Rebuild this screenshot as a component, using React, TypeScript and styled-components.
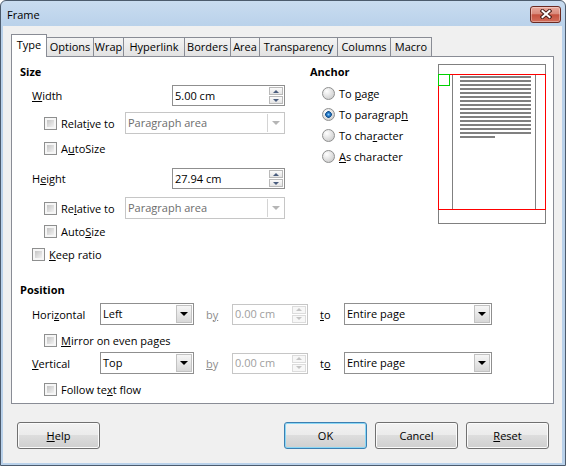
import React from "react";
import styled, { createGlobalStyle } from "styled-components";

const GlobalStyle = createGlobalStyle`
  html, body { margin: 0; padding: 0; background: #ffffff; }
  body { font-family: "Open Sans", "Noto Sans", "DejaVu Sans", sans-serif; font-size: 11px; color: #000; }
  *, *::before, *::after { box-sizing: border-box; }
`;

const Window = styled.div`
  width: 566px;
  height: 466px;
  display: flex;
  flex-direction: column;
  border: 1px solid #4c5b6d;
  border-radius: 6px 6px 0 0;
  background: linear-gradient(#c9dcf0, #b9d1ea 26px, #b9d1ea);
  padding: 0 3px 2px 2px;
  overflow: hidden;
`;

const TitleBar = styled.div`
  height: 25px;
  flex: none;
  display: flex;
  align-items: center;
  justify-content: space-between;
  padding: 1px 1px 0 4px;
`;

const Title = styled.span`
  font-size: 11px;
  color: #000;
`;

const CloseButton = styled.div`
  width: 31px;
  height: 17px;
  border: 1px solid #6b2a22;
  border-radius: 3px;
  background: linear-gradient(#e9a99c, #d98a7b 45%, #c5513e 52%, #d26e5b);
  box-shadow: inset 0 0 0 1px rgba(255, 255, 255, 0.35);
  display: flex;
  align-items: center;
  justify-content: center;
`;

const Content = styled.div`
  flex: 1;
  background: #f0f0f0;
  display: flex;
  flex-direction: column;
  padding: 8px 8px 0 8px;
`;

const TabBar = styled.div`
  height: 22px;
  display: flex;
  align-items: flex-end;
  position: relative;
  z-index: 1;
`;

const Tab = styled.div<{ $w: number; $active?: boolean }>`
  width: ${(p) => p.$w}px;
  height: ${(p) => (p.$active ? 23 : 19)}px;
  margin-bottom: ${(p) => (p.$active ? -1 : 0)}px;
  margin-left: -1px;
  &:first-child { margin-left: 0; }
  border: 1px solid #898c95;
  border-bottom: none;
  background: ${(p) => (p.$active ? "#ffffff" : "linear-gradient(#f4f4f4, #e2e2e2)")};
  display: flex;
  align-items: center;
  justify-content: center;
  padding-bottom: ${(p) => (p.$active ? 3 : 2)}px;
  position: relative;
  z-index: ${(p) => (p.$active ? 2 : 1)};
  white-space: nowrap;
`;

const Panel = styled.div`
  height: 348px;
  border: 1px solid #898c95;
  background: #ffffff;
  padding: 7px 7px 0 8px;
  display: flex;
  flex-direction: column;
`;

const TopArea = styled.div`
  display: flex;
  align-items: flex-start;
`;

const LeftCol = styled.div`
  width: 265px;
  display: flex;
  flex-direction: column;
`;

const AnchorCol = styled.div`
  flex: 1;
  margin-left: 25px;
  display: flex;
  flex-direction: column;
`;

const Heading = styled.div<{ $mt?: number }>`
  font-weight: 700;
  height: 16px;
  line-height: 15px;
  margin-top: ${(p) => p.$mt ?? 0}px;
`;

const Row = styled.div<{ $mt?: number; $h?: number; $indent?: number }>`
  display: flex;
  align-items: center;
  height: ${(p) => p.$h ?? 20}px;
  margin-top: ${(p) => p.$mt ?? 0}px;
  padding-left: ${(p) => p.$indent ?? 0}px;
  white-space: nowrap;
`;

const Mn = styled.span`
  text-decoration: underline;
`;

const Label = styled.span<{ $w?: number; $ml?: number; $disabled?: boolean }>`
  ${(p) => (p.$w ? `width: ${p.$w}px; flex: none;` : "")}
  margin-left: ${(p) => p.$ml ?? 0}px;
  color: ${(p) => (p.$disabled ? "#8d8d8d" : "#000")};
`;

const CheckBox = styled.span`
  width: 13px;
  height: 13px;
  flex: none;
  border: 1px solid #8e8f8f;
  padding: 2px;
  background: linear-gradient(135deg, #c4c4c4, #f2f2f2) content-box, #f6f6f6;
  margin-right: 4px;
`;

const Radio = styled.span<{ $checked?: boolean }>`
  width: 13px;
  height: 13px;
  flex: none;
  border-radius: 50%;
  border: 1px solid #8e8f8f;
  margin-right: 4px;
  background: ${(p) =>
    p.$checked
      ? "radial-gradient(circle at 50% 50%, #8fd3ff 0, #2b7fce 1.5px, #134f8c 3px, transparent 3.6px), radial-gradient(circle at 35% 30%, #ffffff, #d2d2d2 75%)"
      : "radial-gradient(circle at 35% 30%, #ffffff, #d2d2d2 75%)"};
`;

const Field = styled.div<{ $w: number; $h?: number; $disabled?: boolean }>`
  width: ${(p) => p.$w}px;
  height: ${(p) => p.$h ?? 21}px;
  flex: none;
  display: flex;
  align-items: stretch;
  border: 1px solid ${(p) => (p.$disabled ? "#c6c6c6" : "#8f8f8f")};
  background: #ffffff;
  padding: 1px;
`;

const PushRight = styled.div`
  margin-left: auto;
  display: flex;
`;

const FieldText = styled.div<{ $disabled?: boolean; $soft?: boolean }>`
  flex: 1;
  display: flex;
  align-items: center;
  padding-left: 1px;
  padding-bottom: 1px;
  color: ${(p) => (p.$disabled ? "#a0a0a0" : p.$soft ? "#6d6d6d" : "#000")};
`;

const SpinButtons = styled.div`
  width: 14px;
  display: flex;
  flex-direction: column;
  gap: 1px;
`;

const SpinHalf = styled.div<{ $disabled?: boolean }>`
  flex: 1;
  border: 1px solid ${(p) => (p.$disabled ? "#dcdcdc" : "#b9b9b9")};
  background: ${(p) => (p.$disabled ? "#f7f7f7" : "linear-gradient(#fbfbfb, #e4e4e4)")};
  display: flex;
  align-items: center;
  justify-content: center;
`;

const SpinArrow = styled.span<{ $up?: boolean; $disabled?: boolean }>`
  width: 0;
  height: 0;
  border-left: 3px solid transparent;
  border-right: 3px solid transparent;
  ${(p) =>
    p.$up
      ? `border-bottom: 3px solid ${p.$disabled ? "#c4c4c4" : "#4a5d7e"};`
      : `border-top: 3px solid ${p.$disabled ? "#c4c4c4" : "#4a5d7e"};`}
`;

const DropButton = styled.div<{ $disabled?: boolean }>`
  width: 16px;
  flex: none;
  display: flex;
  align-items: center;
  justify-content: center;
  ${(p) =>
    p.$disabled
      ? "border-left: 1px solid #d4d4d4; background: #ffffff;"
      : "border: 1px solid #c2c2c2; background: linear-gradient(#f6f6f6, #d8d8d8);"}
`;

const DropArrow = styled.span<{ $disabled?: boolean }>`
  width: 0;
  height: 0;
  border-left: 4px solid transparent;
  border-right: 4px solid transparent;
  border-top: 4px solid ${(p) => (p.$disabled ? "#b5b5b5" : "#000")};
`;

const PreviewSvg = styled.svg`
  flex: none;
  display: block;
`;

const ButtonRow = styled.div`
  display: flex;
  align-items: center;
  gap: 8px;
  margin-top: 18px;
  padding: 0 5px 0 6px;
`;

const Spacer = styled.div`
  flex: 1;
`;

const Button = styled.button<{ $default?: boolean }>`
  width: 83px;
  height: 27px;
  padding: 0 0 1px 0;
  font: inherit;
  color: #000;
  border: 1px solid ${(p) => (p.$default ? "#3c7fb1" : "#707070")};
  border-radius: 3px;
  background: linear-gradient(#f2f2f2, #ebebeb 50%, #dddddd 50%, #cfcfcf);
  box-shadow: inset 0 0 0 1px ${(p) => (p.$default ? "#8ad7f5" : "#fbfbfb")};
`;

const tabs = [
  { label: "Type", w: 36, active: true },
  { label: "Options", w: 48 },
  { label: "Wrap", w: 31 },
  { label: "Hyperlink", w: 62 },
  { label: "Borders", w: 47 },
  { label: "Area", w: 30 },
  { label: "Transparency", w: 79 },
  { label: "Columns", w: 54 },
  { label: "Macro", w: 42 },
];

function Spin({ w, value, disabled }: { w: number; value: string; disabled?: boolean }) {
  return (
    <Field $w={w} $disabled={disabled}>
      <FieldText $disabled={disabled}>{value}</FieldText>
      <SpinButtons>
        <SpinHalf $disabled={disabled}>
          <SpinArrow $up $disabled={disabled} />
        </SpinHalf>
        <SpinHalf $disabled={disabled}>
          <SpinArrow $disabled={disabled} />
        </SpinHalf>
      </SpinButtons>
    </Field>
  );
}

function Dropdown({ w, value, disabled }: { w: number; value: string; disabled?: boolean }) {
  return (
    <Field $w={w} $h={22} $disabled={disabled}>
      <FieldText $soft={disabled}>{value}</FieldText>
      <DropButton $disabled={disabled}>
        <DropArrow $disabled={disabled} />
      </DropButton>
    </Field>
  );
}

function Preview() {
  const lines = Array.from({ length: 15 }, (_, i) => i);
  return (
    <PreviewSvg width="108" height="160" viewBox="0 0 108 160">
      <rect x="0.5" y="0.5" width="107" height="159" fill="#ffffff" stroke="#808080" />
      <line x1="14.5" y1="10.5" x2="14.5" y2="145.5" stroke="#808080" />
      <line x1="97.5" y1="10.5" x2="97.5" y2="145.5" stroke="#808080" />
      {lines.map((i) => (
        <rect key={i} x="22" y={12 + i * 4} width="71" height="2" fill="#808080" />
      ))}
      <rect x="22" y="72" width="35" height="2" fill="#808080" />
      <rect x="0.5" y="10.5" width="107" height="135" fill="none" stroke="#ff0000" />
      <rect x="0.5" y="10.5" width="11" height="11" fill="none" stroke="#00d000" />
    </PreviewSvg>
  );
}

export default function App() {
  return (
    <>
      <GlobalStyle />
      <Window>
        <TitleBar>
          <Title>Frame</Title>
          <CloseButton>
            <svg width="12" height="10" viewBox="0 0 12 10">
              <path d="M2.5 2 L9.5 8 M9.5 2 L2.5 8" stroke="#4a1f1a" strokeWidth="4" strokeLinecap="square" />
              <path d="M2.5 2 L9.5 8 M9.5 2 L2.5 8" stroke="#ffffff" strokeWidth="2" strokeLinecap="square" />
            </svg>
          </CloseButton>
        </TitleBar>
        <Content>
          <TabBar>
            {tabs.map((t) => (
              <Tab key={t.label} $w={t.w} $active={t.active}>
                {t.label}
              </Tab>
            ))}
          </TabBar>
          <Panel>
            <TopArea>
              <LeftCol>
                <Heading>Size</Heading>
                <Row $mt={5} $h={21} $indent={12}>
                  <Label><Mn>W</Mn>idth</Label>
                  <PushRight><Spin w={113} value="5.00 cm" /></PushRight>
                </Row>
                <Row $mt={6} $h={22} $indent={24}>
                  <CheckBox />
                  <Label>Relat<Mn>i</Mn>ve to</Label>
                  <PushRight><Dropdown w={160} value="Paragraph area" disabled /></PushRight>
                </Row>
                <Row $mt={4} $h={20} $indent={24}>
                  <CheckBox />
                  <Label>A<Mn>u</Mn>toSize</Label>
                </Row>
                <Row $mt={10} $h={21} $indent={12}>
                  <Label>H<Mn>e</Mn>ight</Label>
                  <PushRight><Spin w={113} value="27.94 cm" /></PushRight>
                </Row>
                <Row $mt={8} $h={22} $indent={24}>
                  <CheckBox />
                  <Label>Re<Mn>l</Mn>ative to</Label>
                  <PushRight><Dropdown w={160} value="Paragraph area" disabled /></PushRight>
                </Row>
                <Row $mt={2} $h={20} $indent={24}>
                  <CheckBox />
                  <Label>Auto<Mn>S</Mn>ize</Label>
                </Row>
                <Row $mt={3} $h={20} $indent={12}>
                  <CheckBox />
                  <Label><Mn>K</Mn>eep ratio</Label>
                </Row>
              </LeftCol>
              <AnchorCol>
                <Heading>Anchor</Heading>
                <Row $mt={3} $h={21} $indent={12}>
                  <Radio />
                  <Label>To <Mn>p</Mn>age</Label>
                </Row>
                <Row $h={21} $indent={12}>
                  <Radio $checked />
                  <Label>To paragrap<Mn>h</Mn></Label>
                </Row>
                <Row $h={21} $indent={12}>
                  <Radio />
                  <Label>To cha<Mn>r</Mn>acter</Label>
                </Row>
                <Row $h={21} $indent={12}>
                  <Radio />
                  <Label><Mn>A</Mn>s character</Label>
                </Row>
              </AnchorCol>
              <Preview />
            </TopArea>
            <Heading $mt={18}>Position</Heading>
            <Row $mt={5} $h={22} $indent={12}>
              <Label $w={68}>Hori<Mn>z</Mn>ontal</Label>
              <Dropdown w={94} value="Left" />
              <Label $w={26} $ml={12} $disabled>b<Mn>y</Mn></Label>
              <Spin w={76} value="0.00 cm" disabled />
              <Label $w={24} $ml={12}><Mn>t</Mn>o</Label>
              <Dropdown w={148} value="Entire page" />
            </Row>
            <Row $mt={5} $h={20} $indent={24}>
              <CheckBox />
              <Label><Mn>M</Mn>irror on even pages</Label>
            </Row>
            <Row $mt={2} $h={22} $indent={12}>
              <Label $w={68}><Mn>V</Mn>ertical</Label>
              <Dropdown w={94} value="Top" />
              <Label $w={26} $ml={12} $disabled><Mn>b</Mn>y</Label>
              <Spin w={76} value="0.00 cm" disabled />
              <Label $w={24} $ml={12}>t<Mn>o</Mn></Label>
              <Dropdown w={148} value="Entire page" />
            </Row>
            <Row $mt={5} $h={20} $indent={24}>
              <CheckBox />
              <Label>Follow te<Mn>x</Mn>t flow</Label>
            </Row>
          </Panel>
          <ButtonRow>
            <Button><Mn>H</Mn>elp</Button>
            <Spacer />
            <Button $default>OK</Button>
            <Button>Cancel</Button>
            <Button><Mn>R</Mn>eset</Button>
          </ButtonRow>
        </Content>
      </Window>
    </>
  );
}
